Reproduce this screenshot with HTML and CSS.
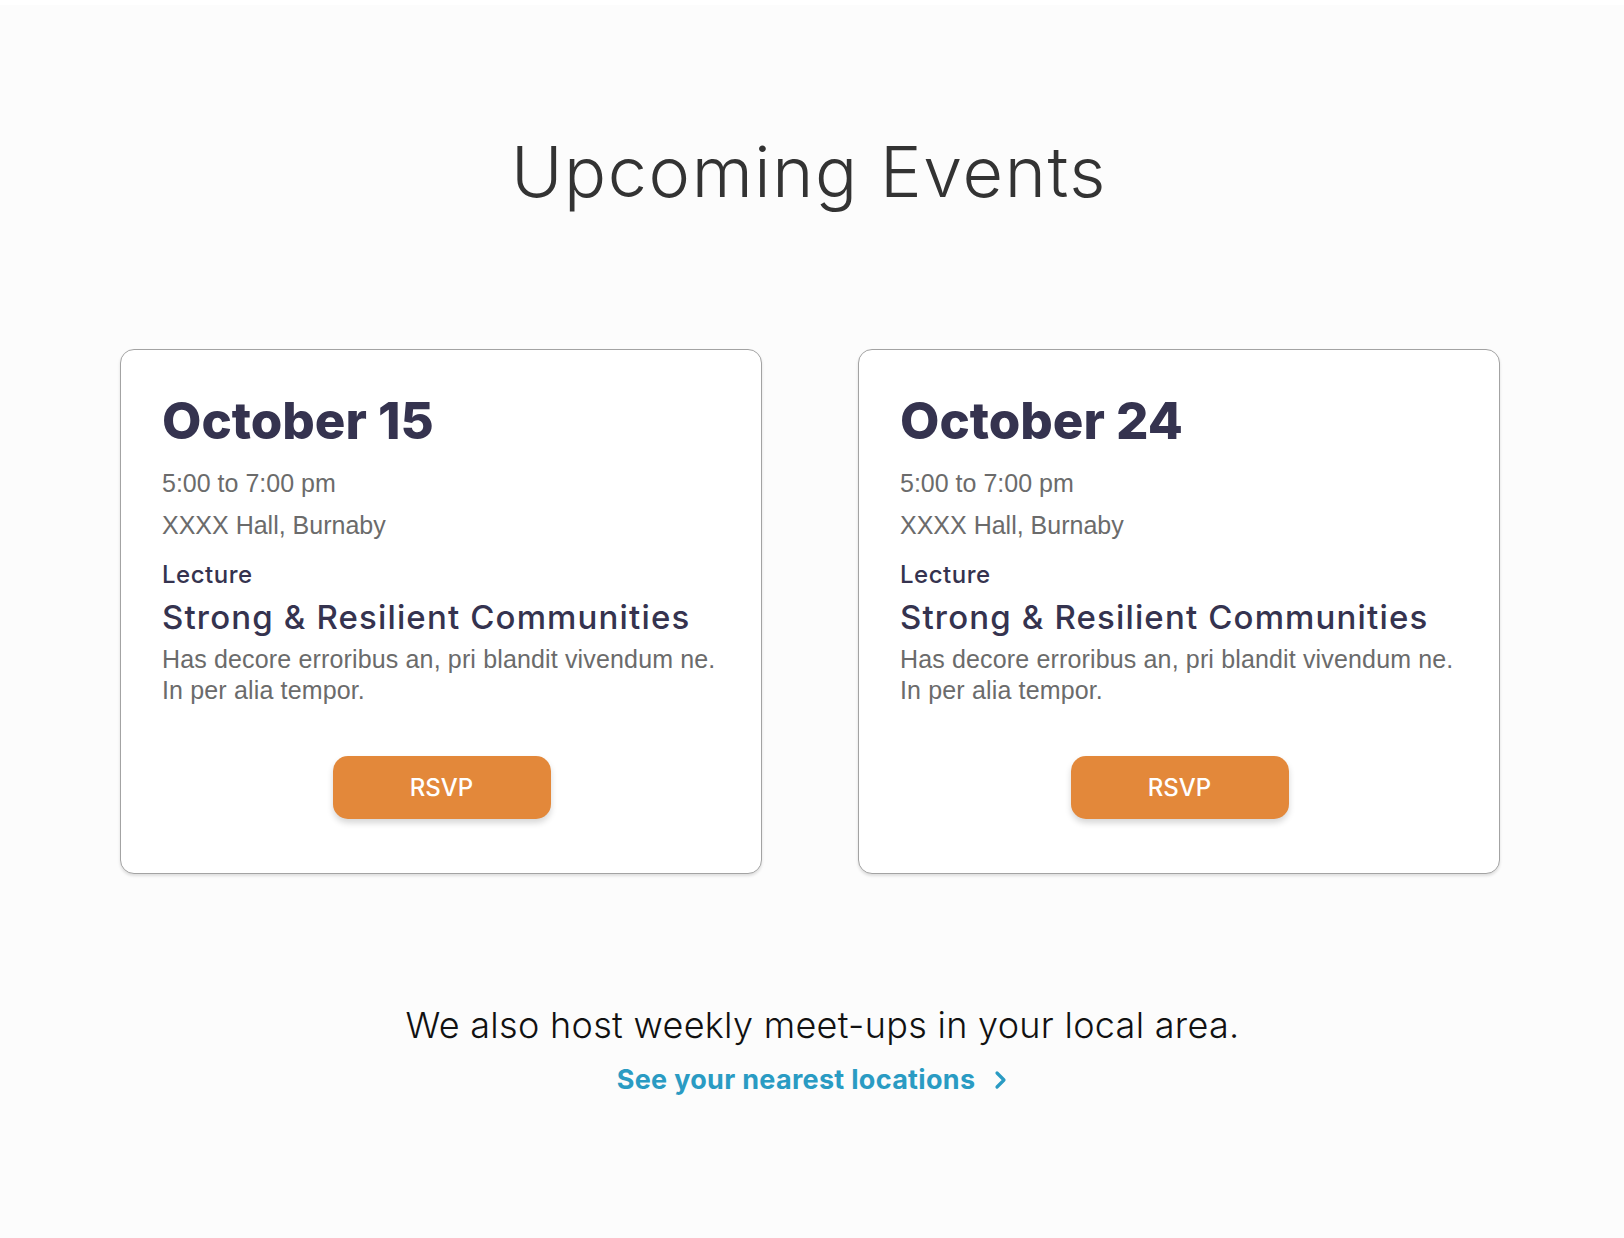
FILE: index.html
```html
<!DOCTYPE html>
<html lang="en">
<head>
<meta charset="utf-8">
<title>Upcoming Events</title>
<link rel="stylesheet" href="styles.css">
</head>
<body>
<main class="page">
  <h1 class="title">Upcoming Events</h1>
  <section class="cards">
    <article class="card">
      <h2 class="date">October 15</h2>
      <p class="meta">5:00 to 7:00 pm</p>
      <p class="meta">XXXX Hall, Burnaby</p>
      <p class="kind">Lecture</p>
      <h3 class="event-name">Strong &amp; Resilient Communities</h3>
      <p class="desc">Has decore erroribus an, pri blandit vivendum ne.<br>In per alia tempor.</p>
      <div class="actions"><button class="rsvp">RSVP</button></div>
    </article>
    <article class="card">
      <h2 class="date">October 24</h2>
      <p class="meta">5:00 to 7:00 pm</p>
      <p class="meta">XXXX Hall, Burnaby</p>
      <p class="kind">Lecture</p>
      <h3 class="event-name">Strong &amp; Resilient Communities</h3>
      <p class="desc">Has decore erroribus an, pri blandit vivendum ne.<br>In per alia tempor.</p>
      <div class="actions"><button class="rsvp">RSVP</button></div>
    </article>
  </section>
  <p class="more">We also host weekly meet-ups in your local area.</p>
  <a class="link" href="#">See your nearest locations
    <svg class="chev" width="14" height="22" viewBox="0 0 14 22" aria-hidden="true"><polyline points="4,4 11,11 4,18" fill="none" stroke="currentColor" stroke-width="3.2" stroke-linecap="round" stroke-linejoin="round"/></svg>
  </a>
</main>
</body>
</html>
```

FILE: styles.css
```css
html, body {
  margin: 0;
  padding: 0;
}
body {
  background: #fcfcfc;
  border-top: 5px solid #ffffff;
  font-family: Inter, "Noto Sans", sans-serif;
  min-height: 1233px;
}
.page {
  display: flex;
  flex-direction: column;
  align-items: center;
  padding-top: 127px;
}
.title {
  margin: 0;
  padding-right: 6px;
  font-family: Inter, sans-serif;
  font-weight: 300;
  font-size: 70px;
  line-height: 80px;
  color: #333333;
  letter-spacing: 1.6px;
}
.cards {
  display: grid;
  grid-template-columns: 642px 642px;
  column-gap: 96px;
  margin-top: 137px;
  margin-right: 4px;
}
.card {
  box-sizing: border-box;
  height: 525px;
  background: #ffffff;
  border: 1px solid #a3a3a3;
  border-radius: 14px;
  box-shadow: 0 2px 3px rgba(0, 0, 0, 0.12);
  padding: 45px 36px 0 41px;
  display: flex;
  flex-direction: column;
}
.date {
  margin: 0;
  font-family: Inter, sans-serif;
  font-weight: 800;
  font-size: 51px;
  line-height: 52px;
  letter-spacing: 0;
  color: #35334f;
}
.meta {
  margin: 0;
  font-family: "Liberation Sans", Arial, sans-serif;
  font-size: 25px;
  line-height: 42px;
  color: #6b6b6b;
}
.date + .meta {
  margin-top: 15px;
}
.kind {
  margin: 13px 0 0;
  font-family: Inter, sans-serif;
  font-weight: 500;
  font-size: 24px;
  line-height: 32px;
  letter-spacing: 0.5px;
  color: #35334f;
}
.event-name {
  margin: 6px 0 0;
  font-family: Inter, sans-serif;
  font-weight: 500;
  font-size: 33px;
  line-height: 40px;
  letter-spacing: 1.15px;
  color: #35334f;
}
.desc {
  margin: 7px 0 0;
  font-family: "Liberation Sans", Arial, sans-serif;
  font-size: 25px;
  line-height: 31px;
  letter-spacing: 0.15px;
  color: #6b6b6b;
}
.actions {
  display: flex;
  justify-content: center;
  margin-top: 50px;
  padding-right: 4px;
}
.rsvp {
  width: 218px;
  height: 63px;
  border: none;
  border-radius: 15px;
  background: #e3883a;
  color: #ffffff;
  font-family: Inter, sans-serif;
  font-weight: 500;
  font-size: 24px;
  box-shadow: 0 4px 6px rgba(0, 0, 0, 0.16);
  cursor: pointer;
}
.more {
  margin: 127px 0 0;
  padding-left: 21px;
  font-family: Inter, sans-serif;
  font-weight: 300;
  font-size: 36px;
  line-height: 48px;
  letter-spacing: 0.3px;
  color: #111111;
}
.link {
  margin-top: 14px;
  display: flex;
  align-items: center;
  gap: 18px;
  font-family: Inter, sans-serif;
  font-weight: 700;
  font-size: 27px;
  line-height: 34px;
  letter-spacing: 0.3px;
  color: #2a9bc3;
  text-decoration: none;
  padding-left: 0;
}
.chev {
  display: block;
}
```
